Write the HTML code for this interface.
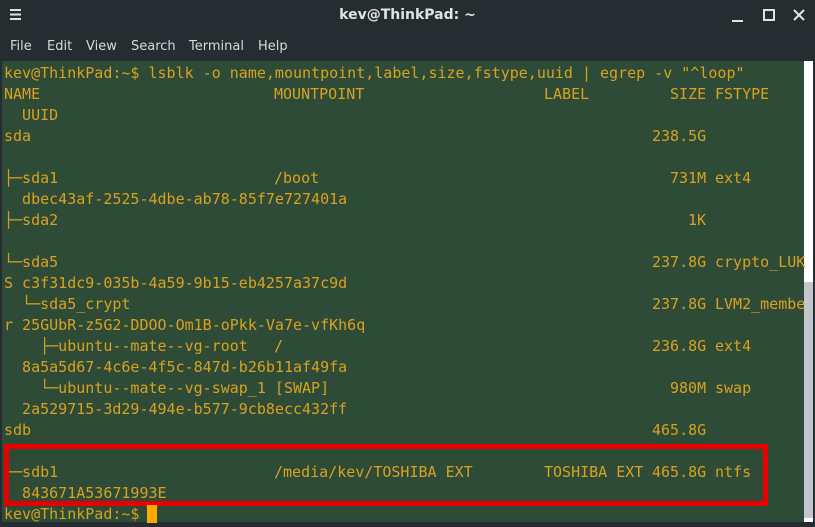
<!DOCTYPE html>
<html><head><meta charset="utf-8"><style>
html,body{margin:0;padding:0;width:815px;height:527px;overflow:hidden;background:#252d31;font-family:"DejaVu Sans","Liberation Sans",sans-serif}
#title{position:absolute;left:0;top:0;width:815px;height:31px;color:#dfe3e6;font-size:14px;font-weight:bold}
#title .t{position:absolute;left:0;width:815px;text-align:center;top:7px}
.menu{position:absolute;top:39px;color:#d6dadd;font-size:13px}
#term{position:absolute;left:2px;top:61px;width:802px;height:461px;background:#2e4b37;overflow:hidden}
#sb{position:absolute;left:804px;top:61px;width:9px;height:461px;background:#fff}
#thumb{position:absolute;left:804px;top:282px;width:9px;height:236px;background:#c3c7cb}
.r{position:absolute;left:2px;height:21px;width:800px;font-family:"DejaVu Sans Mono","Liberation Mono",monospace;font-size:15px;line-height:21px;color:#d9a21e;white-space:pre}
.r span{position:absolute;top:0}
#box{position:absolute;left:4px;top:444px;width:754px;height:52px;border:5px solid #e60000}
#cur{position:absolute;left:147px;top:505px;width:10px;height:18px;background:#ffa800}
</style></head><body>
<div id="title">
<svg style="position:absolute;left:10px;top:9px" width="11" height="11"><rect y="0" width="11" height="2" fill="#dfe3e6"/><rect y="4.5" width="11" height="2" fill="#dfe3e6"/><rect y="9" width="11" height="2" fill="#dfe3e6"/></svg>
<div class="t">kev@ThinkPad: ~</div>
<svg style="position:absolute;left:732px;top:9px" width="75" height="14"><rect x="0" y="11" width="11" height="2" fill="#dfe3e6"/><rect x="32" y="1" width="10" height="10" fill="none" stroke="#dfe3e6" stroke-width="2"/><path d="M62 1L72 11M72 1L62 11" stroke="#dfe3e6" stroke-width="2"/></svg>
</div>
<div class="menu" style="left:10px">File</div>
<div class="menu" style="left:47px">Edit</div>
<div class="menu" style="left:86px">View</div>
<div class="menu" style="left:131px">Search</div>
<div class="menu" style="left:189px">Terminal</div>
<div class="menu" style="left:258px">Help</div>
<div id="term"></div>
<div id="sb"></div><div id="thumb"></div>

<div class="r" style="top:63px"><span style="left:2px">kev@ThinkPad:~$ lsblk -o name,mountpoint,label,size,fstype,uuid | egrep -v "^loop"</span></div>
<div class="r" style="top:84px"><span style="left:2px">NAME</span><span style="left:272px">MOUNTPOINT</span><span style="left:542px">LABEL</span><span style="left:668px">SIZE</span><span style="left:713px">FSTYPE</span></div>
<div class="r" style="top:105px"><span style="left:2px">  UUID</span></div>
<div class="r" style="top:126px"><span style="left:2px">sda</span><span style="left:650px">238.5G</span></div>
<div class="r" style="top:168px"><span style="left:2px">├─sda1</span><span style="left:272px">/boot</span><span style="left:668px">731M</span><span style="left:713px">ext4</span></div>
<div class="r" style="top:189px"><span style="left:2px">  dbec43af-2525-4dbe-ab78-85f7e727401a</span></div>
<div class="r" style="top:210px"><span style="left:2px">├─sda2</span><span style="left:686px">1K</span></div>
<div class="r" style="top:252px"><span style="left:2px">└─sda5</span><span style="left:650px">237.8G</span><span style="left:713px">crypto_LUK</span></div>
<div class="r" style="top:273px"><span style="left:2px">S c3f31dc9-035b-4a59-9b15-eb4257a37c9d</span></div>
<div class="r" style="top:294px"><span style="left:2px">  └─sda5_crypt</span><span style="left:650px">237.8G</span><span style="left:713px">LVM2_membe</span></div>
<div class="r" style="top:315px"><span style="left:2px">r 25GUbR-z5G2-DDOO-Om1B-oPkk-Va7e-vfKh6q</span></div>
<div class="r" style="top:336px"><span style="left:2px">    ├─ubuntu--mate--vg-root</span><span style="left:272px">/</span><span style="left:650px">236.8G</span><span style="left:713px">ext4</span></div>
<div class="r" style="top:357px"><span style="left:2px">  8a5a5d67-4c6e-4f5c-847d-b26b11af49fa</span></div>
<div class="r" style="top:378px"><span style="left:2px">    └─ubuntu--mate--vg-swap_1 [SWAP]</span><span style="left:668px">980M</span><span style="left:713px">swap</span></div>
<div class="r" style="top:399px"><span style="left:2px">  2a529715-3d29-494e-b577-9cb8ecc432ff</span></div>
<div class="r" style="top:420px"><span style="left:2px">sdb</span><span style="left:650px">465.8G</span></div>
<div class="r" style="top:462px"><span style="left:2px">└─sdb1</span><span style="left:272px">/media/kev/TOSHIBA EXT</span><span style="left:542px">TOSHIBA EXT</span><span style="left:650px">465.8G</span><span style="left:713px">ntfs</span></div>
<div class="r" style="top:483px"><span style="left:2px">  843671A53671993E</span></div>
<div id="box"></div>
<div class="r" style="top:504px"><span style="left:2px">kev@ThinkPad:~$</span></div>
<div id="cur"></div>
</body></html>
